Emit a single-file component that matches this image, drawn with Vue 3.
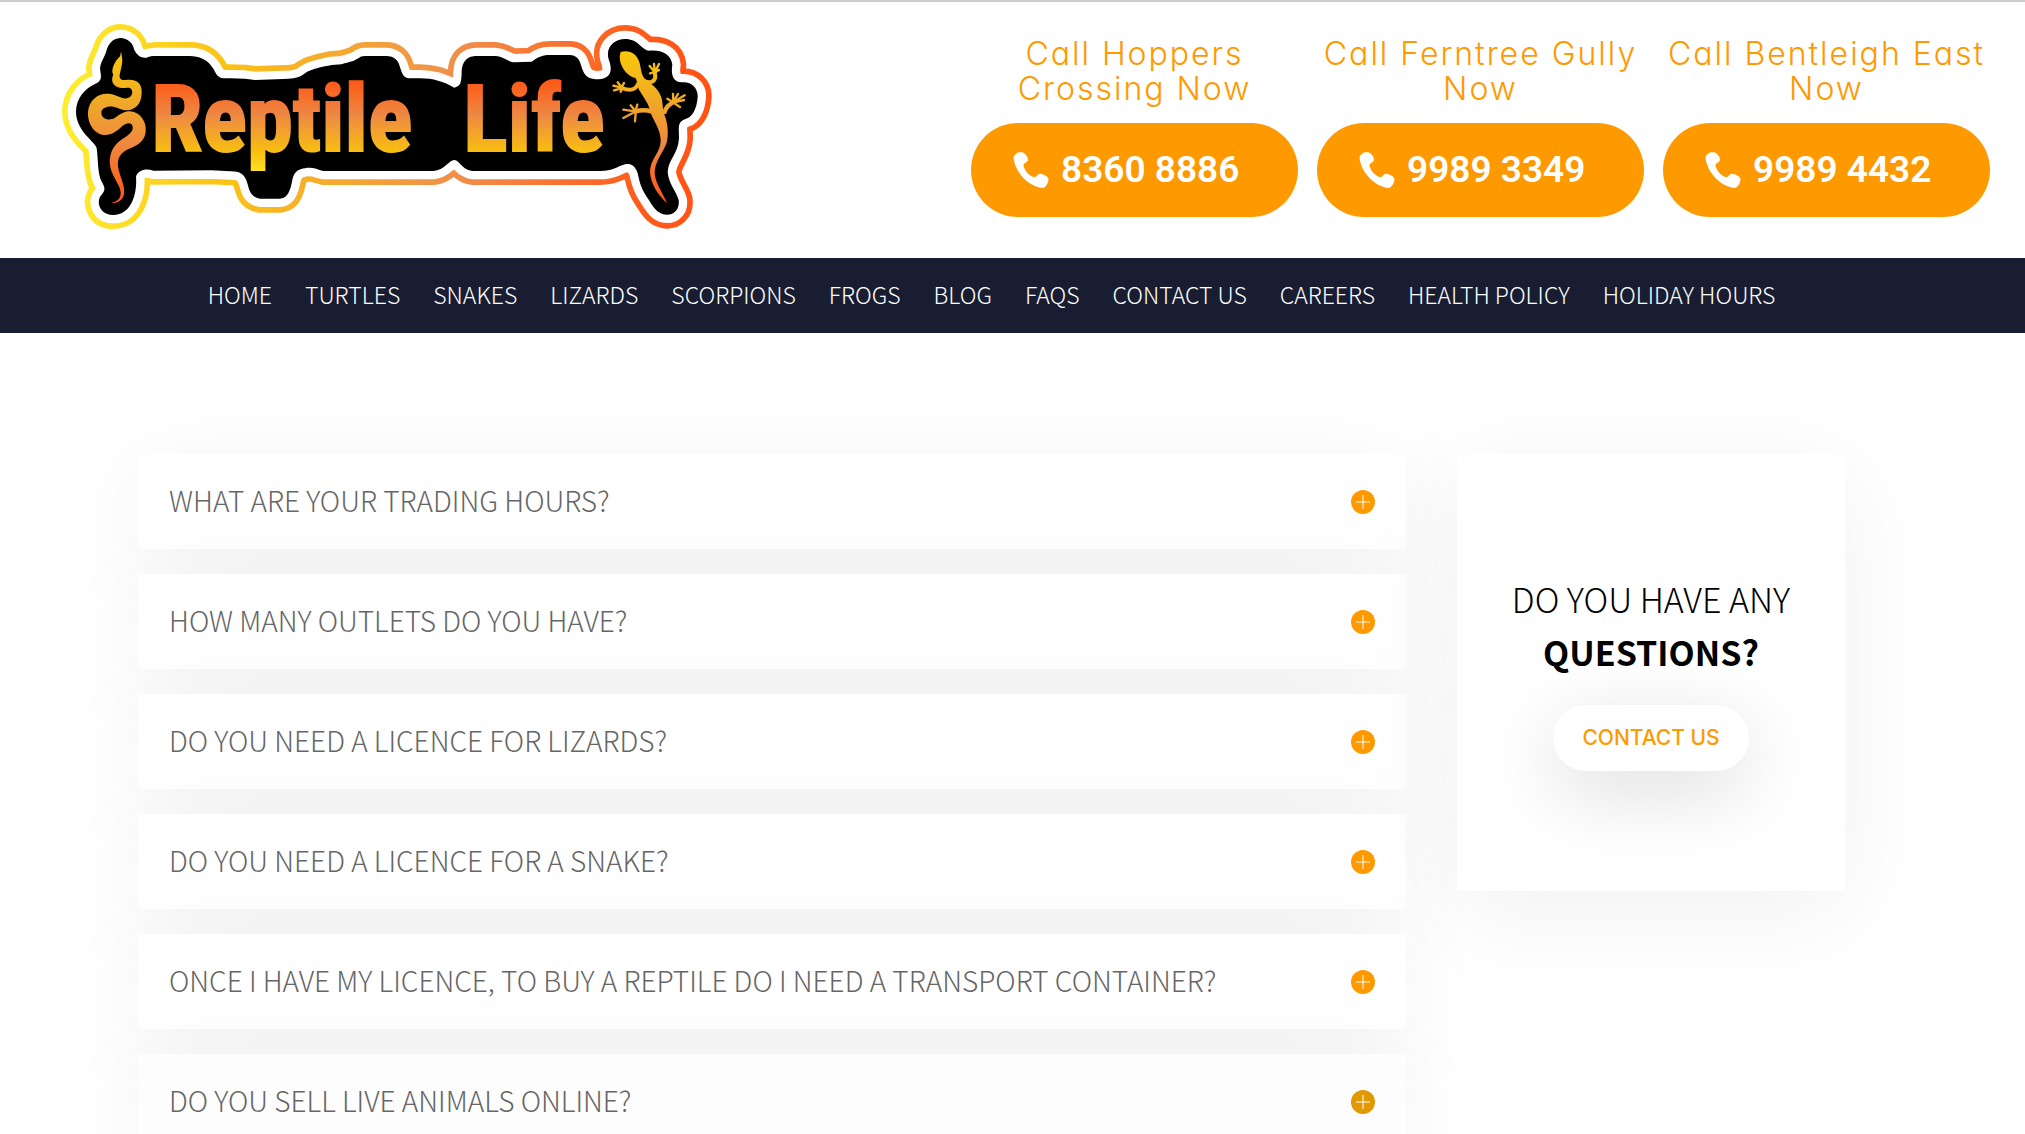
<script setup>
const stores = [
  { label: 'Call Hoppers Crossing Now', phone: '8360 8886' },
  { label: 'Call Ferntree Gully Now', phone: '9989 3349' },
  { label: 'Call Bentleigh East Now', phone: '9989 4432' },
]

const links = [
  'Home', 'Turtles', 'Snakes', 'Lizards', 'Scorpions', 'Frogs', 'Blog', 'FAQs',
  'Contact Us', 'Careers', 'Health Policy', 'Holiday Hours',
]

const questions = [
  'What are your trading hours?',
  'How many outlets do you have?',
  'Do you need a licence for lizards?',
  'Do you need a licence for a snake?',
  'Once I have my licence, to buy a reptile do I need a transport container?',
  'Do you sell live animals online?',
]

const outline = 'M212 84C232 84 250 100 252 118C258 132 270 146 290 143C300 139 306 138 318 138L420 138C465 138 485 165 495 185C505 207 520 205 540 205L585 206L615 210L700 207C740 207 752 200 765 190C785 175 820 170 845 165L875 163C900 155 910 155 925 145Q932 138 945 138L1010 138C1045 140 1048 165 1053 180C1060 205 1070 205 1090 205L1110 205C1150 205 1180 215 1213 233C1235 228 1233 215 1235 190C1235 150 1255 138 1280 138L1335 138C1365 140 1370 155 1395 157L1445 155C1465 140 1480 135 1500 135L1560 135C1590 137 1590 160 1598 180C1605 200 1620 208 1645 208C1685 205 1688 180 1676 148C1665 110 1695 87 1725 87C1765 87 1770 115 1795 122C1840 118 1864 135 1867 165C1862 195 1870 217 1895 217C1925 214 1945 235 1943 262C1940 300 1925 320 1912 325C1880 335 1887 350 1887 385C1885 430 1855 450 1853 485C1855 520 1880 545 1886 570C1890 600 1870 615 1850 614C1820 612 1810 590 1790 560C1770 530 1768 510 1763 490C1755 465 1740 460 1725 463C1700 470 1690 483 1650 483L1270 483C1235 480 1230 452 1213 450C1195 452 1185 480 1150 483L820 483C800 478 785 470 765 475C730 480 730 500 725 520C718 555 705 565 690 566L630 566C600 560 598 540 592 520C585 490 565 483 540 484L485 481L310 482C290 475 265 478 258 500C262 550 245 615 190 615C150 615 140 580 150 560C165 545 168 535 155 515C142 490 145 450 140 415C140 398 78 365 78 305C78 265 105 235 135 222C160 212 152 195 150 175C152 155 165 140 170 120C178 95 195 84 212 84Z'
</script>

<template>
  <div class="page">
    <header class="top">
      <a class="brand" href="#">
        <svg class="logo" viewBox="0 0 2040 690" role="img" aria-label="Reptile Life">
          <defs>
            <linearGradient id="edge" gradientUnits="userSpaceOnUse" x1="36" y1="0" x2="1985" y2="0">
              <stop offset="0" stop-color="#ffee30" />
              <stop offset=".25" stop-color="#fac215" />
              <stop offset=".6" stop-color="#f0904a" />
              <stop offset=".9" stop-color="#ff5a1a" />
              <stop offset="1" stop-color="#ff5214" />
            </linearGradient>
            <linearGradient id="letters" gradientUnits="userSpaceOnUse" x1="0" y1="200" x2="0" y2="500">
              <stop offset="0" stop-color="#ff5210" />
              <stop offset=".38" stop-color="#ee8844" />
              <stop offset=".76" stop-color="#f8c010" />
              <stop offset="1" stop-color="#ffec28" />
            </linearGradient>
            <linearGradient id="animal" gradientUnits="userSpaceOnUse" x1="0" y1="125" x2="0" y2="580">
              <stop offset="0" stop-color="#fac80a" />
              <stop offset=".3" stop-color="#f0ac24" />
              <stop offset=".6" stop-color="#ee8a40" />
              <stop offset="1" stop-color="#ff5214" />
            </linearGradient>
          </defs>
          <g stroke-linejoin="round">
            <path :d="outline" fill="none" stroke="url(#edge)" stroke-width="84" />
            <path :d="outline" fill="none" stroke="#fff" stroke-width="50" />
            <path :d="outline" fill="#000" />
          </g>
          <g fill="url(#animal)">
            <path d="M213 124L216 142C219 158 213 176 210 190C206 206 212 212 228 210C262 206 277 222 275 250C274 278 262 294 240 300C218 304 210 294 190 290C168 288 154 296 154 308C154 326 176 334 194 324C218 306 232 300 252 306C280 316 292 346 286 372C280 398 258 408 234 418C210 430 202 446 204 468C208 500 226 524 222 552C219 572 200 582 184 578C202 574 212 566 212 548C212 524 180 496 179 456C180 424 194 402 216 388C236 374 250 366 248 350C245 336 232 338 220 346C200 364 186 376 162 375C132 372 112 340 114 306C117 268 148 246 182 252C206 256 218 270 234 264C250 258 250 240 240 234C226 230 208 240 194 226C186 218 184 206 190 194C184 186 188 170 196 156C202 146 210 142 211 136Z" />
            <path d="M1712 126C1736 118 1760 130 1768 156C1774 176 1772 190 1784 206C1800 222 1822 228 1834 262C1840 282 1836 300 1846 322C1854 346 1856 376 1850 398C1838 432 1814 452 1814 490C1816 520 1838 548 1851 580C1826 556 1802 524 1800 486C1800 446 1832 428 1832 392C1832 356 1808 330 1800 302C1796 280 1780 262 1770 244C1758 226 1764 214 1756 204C1736 200 1716 178 1710 152Q1708 136 1712 126Z" />
          </g>
          <g fill="none" stroke="url(#animal)" stroke-width="7" stroke-linecap="round" stroke-linejoin="round">
            <path stroke-width="12" d="M1776 210C1798 222 1812 218 1816 202L1814 186" />
            <path d="M1814 186L1800 190M1814 186L1799 168M1814 184L1812 162M1816 184L1827 162M1816 187L1827 180" />
            <path stroke-width="12" d="M1764 222C1754 244 1736 242 1716 234" />
            <path d="M1716 234L1703 217M1714 233L1690 227M1714 235L1692 241M1717 236L1712 245M1716 230L1722 219" />
            <path stroke-width="13" d="M1844 306C1848 290 1856 286 1870 276" />
            <path d="M1868 276L1852 266M1870 275L1869 252M1871 274L1884 252M1872 275L1904 256M1872 277L1902 270M1872 279L1890 291" />
            <path stroke-width="13" d="M1804 304C1784 298 1772 300 1756 304" />
            <path d="M1757 302L1762 284M1756 303L1742 286M1755 304L1720 299M1754 306L1720 324M1757 308L1755 334" />
          </g>
          <g class="wordmark" fill="url(#letters)" stroke="url(#letters)">
            <text x="304" y="424">Reptile</text>
            <text x="1240" y="424">Life</text>
          </g>
        </svg>
      </a>
      <div class="stores">
        <section v-for="s in stores" :key="s.phone" class="store">
          <h2>{{ s.label }}</h2>
          <a class="call" :href="'tel:' + s.phone.replace(' ', '')">
            <svg viewBox="0 0 102 105" aria-hidden="true">
              <path fill="currentColor" d="M0 16C2 5 14-1 25 1C36 5 43 16 42 24C40 31 30 31 29 39C31 54 46 70 60 74C68 74 70 62 80 64C92 66 103 74 102 80C101 92 93 104 84 105C44 100 4 60 0 16Z" />
            </svg>
            <span>{{ s.phone }}</span>
          </a>
        </section>
      </div>
    </header>

    <nav class="menu" aria-label="Main">
      <a v-for="l in links" :key="l" href="#">{{ l }}</a>
    </nav>

    <main class="content">
      <div class="faq">
        <button v-for="q in questions" :key="q" class="question" type="button">
          <span>{{ q }}</span>
          <svg viewBox="0 0 24 24" aria-hidden="true">
            <circle cx="12" cy="12" r="12" fill="currentColor" />
            <path d="M5 12H19M12 5V19" stroke="#fff" fill="none" />
          </svg>
        </button>
      </div>
      <aside class="ask">
        <h2>Do you have any <strong>questions?</strong></h2>
        <a class="contact" href="#">Contact Us</a>
      </aside>
    </main>
  </div>
</template>

<style>
body {
  margin: 0;
  background: #fff;
}

html {
  overflow: hidden;
}
</style>

<style scoped>
.page {
  height: 100vh;
  overflow: hidden;
  box-sizing: border-box;
  border-top: 2px solid #ccc;
  font-family: "Noto Sans CJK JP", "Noto Sans CJK SC", sans-serif;
}

.top {
  display: flex;
  justify-content: space-between;
  align-items: flex-start;
  padding: 8px 35px 18px 50px;
}

.logo {
  display: block;
  width: 680px;
  height: 230px;
}

.wordmark {
  font-family: "Roboto Condensed", "Open Sans Condensed", Roboto, sans-serif;
  font-weight: 700;
  font-size: 278px;
  stroke-width: 6px;
}

.stores {
  display: flex;
  gap: 19px;
  padding-top: 26px;
}

.store {
  width: 327px;
}

.store h2 {
  margin: 0 0 17px;
  color: #ff9900;
  font: 300 32px/35px Inter, sans-serif;
  font-feature-settings: "cv11";
  letter-spacing: 2px;
  text-align: center;
}

.call {
  display: flex;
  align-items: center;
  gap: 12px;
  height: 94px;
  padding-left: 42px;
  border-radius: 47px;
  background: #ff9900;
  color: #fff;
  font: 600 37px/48px Roboto, sans-serif;
  text-decoration: none;
}

.call svg {
  width: 36px;
  height: 36px;
}

.menu {
  display: flex;
  justify-content: center;
  gap: 33px;
  padding: 0 42px 2px 0;
  background: #181d31;
}

.menu a {
  color: #fff;
  font-size: 23px;
  font-weight: 300;
  line-height: 73px;
  text-decoration: none;
  text-transform: uppercase;
  white-space: nowrap;
}

.content {
  display: flex;
  align-items: flex-start;
  gap: 51px;
  padding: 121px 180px 60px 138px;
}

.faq {
  flex: 1;
  display: flex;
  flex-direction: column;
  gap: 25px;
}

.question {
  display: flex;
  justify-content: space-between;
  align-items: center;
  height: 95px;
  padding: 0 31px;
  border: 0;
  background: #fff;
  box-shadow: 0 20px 100px rgba(0, 0, 0, 0.06);
  color: #666;
  font: 200 28px/36px "Noto Sans CJK JP", "Noto Sans CJK SC", sans-serif;
  text-align: left;
  text-transform: uppercase;
}

.question span {
  padding-bottom: 4px;
}

.question svg {
  width: 24px;
  height: 24px;
  color: #ff9900;
}

.question:last-child {
  background: #fdfdfd;
}

.question:last-child svg {
  color: #e09900;
}

.ask {
  display: flex;
  flex-direction: column;
  align-items: center;
  width: 388px;
  padding: 118px 40px 120px;
  box-sizing: border-box;
  background: #fff;
  box-shadow: 0 20px 100px rgba(0, 0, 0, 0.06);
}

.ask h2 {
  margin: 0 0 27px;
  color: #000;
  font-size: 34px;
  font-weight: 300;
  line-height: 53px;
  text-align: center;
  text-transform: uppercase;
}

.ask strong {
  display: block;
  font-weight: 700;
}

.contact {
  padding: 0 29px;
  border-radius: 33px;
  background: #fff;
  box-shadow: 0 20px 80px rgba(0, 0, 0, 0.14);
  color: #ff9900;
  font: 500 21px/66px Inter, sans-serif;
  text-decoration: none;
  text-transform: uppercase;
}
</style>
